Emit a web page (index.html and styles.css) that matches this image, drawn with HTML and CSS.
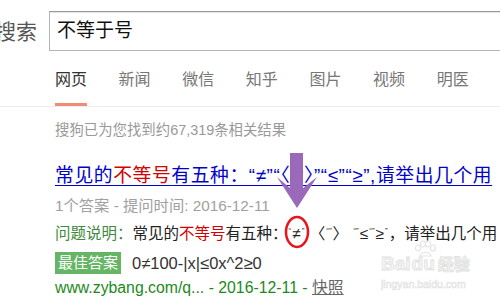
FILE: index.html
```html
<!DOCTYPE html>
<html>
<head>
    <title>不等于号 - 搜狗搜索</title>
    <link rel="stylesheet" href="styles.css">
</head>
<body>
    <div class="page">
        <div class="header">
            <span class="logo">搜索</span>
            <div class="searchbox">不等于号</div>
        </div>

        <div class="tabs">
            <span class="tab active">网页</span>
            <span class="tab">新闻</span>
            <span class="tab">微信</span>
            <span class="tab">知乎</span>
            <span class="tab">图片</span>
            <span class="tab">视频</span>
            <span class="tab">明医</span>
        </div>

        <div class="results">
            <p class="count">搜狗已为您找到约67,319条相关结果</p>

            <div class="result">
                <a class="title" href="#">常见的<em>不等号</em>有五种：“≠”“〈”“〉”“≤”“≥”,请举出几个用</a>
                <p class="meta">1个答案 - 提问时间: 2016-12-11</p>
                <p class="desc"><span class="label">问题说明：</span>常见的<em>不等号</em>有五种：<span class="q">“</span>≠<span class="q">”</span> 〈<span class="q">“”</span>〉 <span class="q">“”</span>≤<span class="q">“”</span>≥<span class="q">”</span>，请举出几个用</p>
                <p class="answer"><span class="badge">最佳答案</span>0≠100-|x|≤0x^2≥0</p>
                <p class="url">www.zybang.com/q... - 2016-12-11 - <a class="snap" href="#">快照</a></p>
            </div>
        </div>

        <!-- annotation drawn over the screenshot -->
        <svg class="marks" width="500" height="300" viewBox="0 0 500 300">
            <polygon points="290,153 303,153 303,188 317,177 297,208 277,177 290,188" fill="#9a69b9"/>
            <ellipse cx="297" cy="232" rx="11" ry="15" fill="none" stroke="#e8141c" stroke-width="2.5"/>
        </svg>

        <div class="watermark">
            <svg class="paw" width="26" height="18" viewBox="0 0 26 18">
                <g fill="none" stroke="#e4e4e4" stroke-width="1.2">
                    <ellipse cx="6" cy="8" rx="2.5" ry="3"/>
                    <ellipse cx="11" cy="4" rx="2.5" ry="3"/>
                    <ellipse cx="16" cy="4" rx="2.5" ry="3"/>
                    <ellipse cx="21" cy="8" rx="2.5" ry="3"/>
                    <path d="M8 16 C9 11 18 11 19 16 Z"/>
                </g>
            </svg>
            <div class="wm-main"><span>Bai</span><span class="du">du</span><span class="jy">经验</span></div>
            <div class="wm-sub">jingyan.baidu.com</div>
        </div>
    </div>
</body>
</html>
```

FILE: styles.css
```css
body { margin: 0; background: #fff; font-family: "Liberation Sans", "Noto Sans CJK SC", sans-serif; }
p { margin: 0; }
em { font-style: normal; color: #d40000; }

.page { position: relative; width: 500px; height: 300px; overflow: hidden; white-space: nowrap; }

.header { display: flex; align-items: center; height: 60px; }
.logo { font-size: 21px; color: #555; margin-left: -5px; width: 54px; }
.searchbox {
    flex: 1;
    height: 38px;
    margin-top: 1px;
    margin-right: -20px;
    border: 1px solid #b5b5b5;
    border-top-color: #9a9a9a;
    box-shadow: inset 0 1px 0 #e6e6e6;
    padding-left: 7px;
    font-size: 19px;
    line-height: 38px;
    color: #111;
}

.tabs { display: flex; gap: 31.6px; padding-left: 55px; border-bottom: 1px solid #ececec; height: 46px; }
.tab { font-size: 16px; line-height: 20px; padding: 10px 0 14px; color: #777; border-bottom: 3px solid transparent; }
.tab.active { color: #333; border-bottom-color: #f28b74; }

.results { padding-left: 55px; }
.count { font-size: 14.4px; line-height: 20px; color: #999; margin-top: 13px; }

.result { margin-top: 24px; }
.title { display: block; font-size: 18.8px; letter-spacing: 0.6px; line-height: 24px; color: #0000cc; text-decoration: underline; text-underline-offset: 3px; }
.meta { font-size: 15.3px; line-height: 22px; color: #a0a0a0; margin-top: 7px; }
.desc { font-size: 15.5px; line-height: 24px; color: #222; margin-top: 2px; }
.desc .label { color: #3e8a3e; }
.q { font-size: 8px; vertical-align: 6px; margin: 0 1px; }
.answer { font-size: 16.5px; line-height: 22px; color: #333; margin-top: 6px; display: flex; align-items: center; }
.badge { background: #65b565; color: #fff; font-size: 15px; padding: 0 3px; margin-right: 11px; line-height: 22px; }
.url { font-size: 15.8px; line-height: 22px; color: #1c8a1c; margin-top: 3px; }
.snap { color: #666; text-decoration: underline; }

.marks { position: absolute; left: 0; top: 0; pointer-events: none; }

.watermark { position: absolute; left: 381px; top: 240px; color: #f6f6f6; pointer-events: none; }
.paw { position: absolute; left: 31px; top: 0; }
.wm-main { margin-top: 15px; font-size: 19px; font-weight: bold; line-height: 18px; -webkit-text-stroke: 0.8px #e0e0e0; }
.wm-main .du { margin-left: 1px; }
.wm-main .jy { font-size: 16px; margin-left: 3px; }
.wm-sub { font-size: 10.5px; line-height: 14px; margin-top: 3px; -webkit-text-stroke: 0.5px #e0e0e0; }
```
